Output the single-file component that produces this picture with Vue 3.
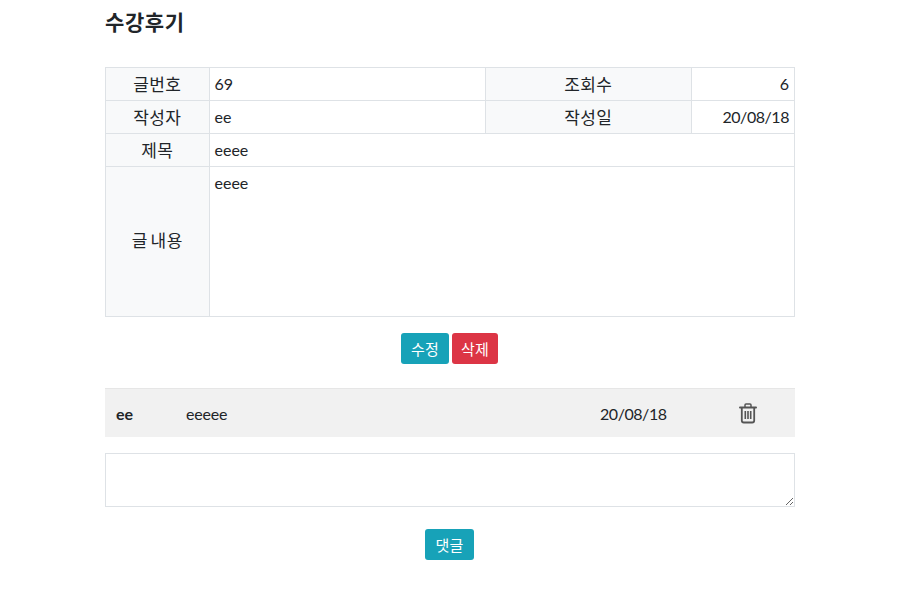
<script setup>
</script>

<template>
  <div class="page">
    <h3 class="title">수강후기</h3>
    <table class="board">
      <colgroup>
        <col class="c1" /><col class="c2" /><col class="c3" /><col class="c4" />
      </colgroup>
      <tbody>
        <tr><th>글번호</th><td>69</td><th>조회수</th><td class="right">6</td></tr>
        <tr><th>작성자</th><td>ee</td><th>작성일</th><td class="right digits">20/08/18</td></tr>
        <tr><th>제목</th><td colspan="3">eeee</td></tr>
        <tr class="content"><th>글 내용</th><td colspan="3">eeee</td></tr>
      </tbody>
    </table>
    <div class="actions">
      <button class="btn info edit">수정</button>
      <button class="btn danger">삭제</button>
    </div>
    <div class="reply">
      <strong class="who">ee</strong>
      <span class="text">eeeee</span>
      <span class="date digits">20/08/18</span>
      <svg class="trash" viewBox="0 0 20 22" width="20" height="22" fill="none" stroke="#555">
        <path d="M2 5.500h16" stroke-width="2" stroke-linecap="round" />
        <path d="M7 5V3a1 1 0 0 1 1-1h4a1 1 0 0 1 1 1v2" stroke-width="1.500" />
        <path d="M3.800 6v12.500a2 2 0 0 0 2 2h8.400a2 2 0 0 0 2-2V6" stroke-width="1.800" />
        <path d="M7.300 9v8M10 9v8M12.700 9v8" stroke-width="1.600" />
      </svg>
    </div>
    <textarea class="box"></textarea>
    <div class="actions second">
      <button class="btn info wide">댓글</button>
    </div>
  </div>
</template>

<style>
body { margin: 0; background: #fff; }
</style>

<style scoped>
.page {
  width: 690px;
  margin-left: 105px;
  font-family: Lato, "Noto Sans CJK KR", sans-serif;
  font-size: 16px;
  color: #212529;
}
.title {
  margin: 0;
  padding-top: 7px;
  height: 58px;
  font-size: 21px;
  letter-spacing: 0.6px;
  font-weight: 700;
  line-height: 29px;
  box-sizing: border-box;
}
.board {
  width: 689px;
  table-layout: fixed;
  border-collapse: collapse;
  margin-top: 9px;
}
.c1 { width: 104px; }
.c2 { width: 276px; }
.c3 { width: 206px; }
.c4 { width: 103px; }
th, td {
  border: 1px solid #dee2e6;
  height: 33px;
  padding: 0 5px 1px 4.500px;
  box-sizing: border-box;
  font-weight: 400;
  vertical-align: middle;
}
th {
  background: #f8f9fa;
  text-align: center;
  font-size: 17px;
  letter-spacing: 0.4px;
  word-spacing: -2px;
}
.right { text-align: right; }
.digits { letter-spacing: -0.450px; }
.content th, .content td { height: 150px; }
.content th { padding-bottom: 5px; }
.content td { vertical-align: top; padding-top: 6px; }
.actions {
  display: flex;
  justify-content: center;
  gap: 3px;
  margin-top: 16px;
  padding-right: 1px;
}
.btn {
  height: 31px;
  padding: 0 8px;
  border: 1px solid transparent;
  border-radius: 3px;
  color: #fff;
  font: inherit;
  font-size: 15px;
  letter-spacing: 0.2px;
}
.edit { padding: 0 9px; }
.wide { padding: 0 9.500px; }
.info { background: #17a2b8; }
.danger { background: #dc3545; }
.reply {
  display: flex;
  align-items: center;
  height: 49px;
  margin-top: 24px;
  background: #f1f1f1;
  border-top: 1px solid #e6e6e6;
  box-sizing: border-box;
}
.who { width: 69px; padding-left: 11px; box-sizing: border-box; font-weight: 700; }
.text { width: 426px; padding-left: 12px; box-sizing: border-box; letter-spacing: -0.2px; }
.date { width: 138px; }
.box {
  display: block;
  width: 690px;
  height: 54px;
  margin-top: 16px;
  border: 1px solid #dee2e6;
  box-sizing: border-box;
  padding: 6px 12px;
}
.second { margin-top: 22px; }
</style>
